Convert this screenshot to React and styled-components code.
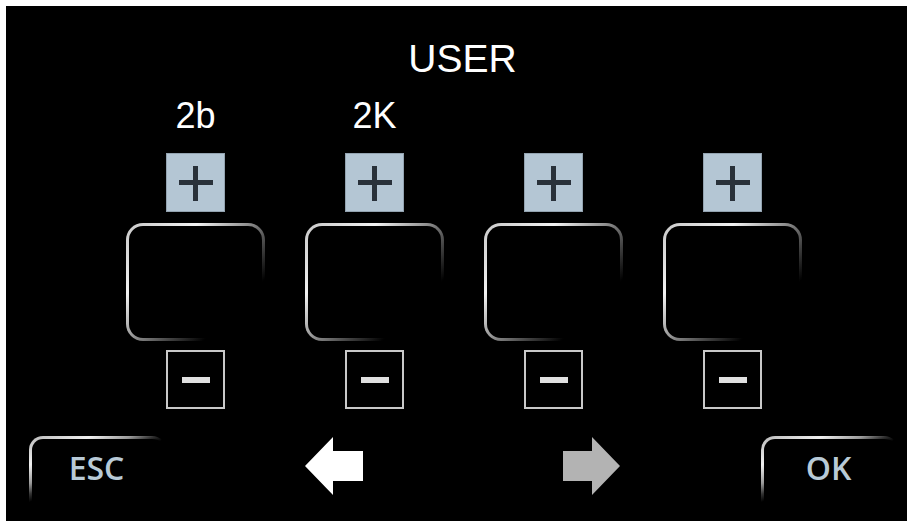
import React from "react";
import styled, { createGlobalStyle } from "styled-components";

const Global = createGlobalStyle`
  html, body { margin: 0; padding: 0; background: #fff; }
  body { overflow: hidden; }
`;

const Panel = styled.div`
  margin: 6px 0 0 6px;
  width: 901px;
  height: 515px;
  background: #000;
  box-sizing: border-box;
  padding-top: 33px;
  display: flex;
  flex-direction: column;
  font-family: "Liberation Sans", Arial, sans-serif;
`;

const Title = styled.div`
  height: 40px;
  line-height: 40px;
  font-size: 39px;
  color: #fff;
  text-align: center;
  padding-left: 12px;
`;

const Columns = styled.div`
  display: grid;
  grid-template-columns: repeat(4, 179px);
  padding-left: 100px;
  margin-top: 19px;
`;

const Column = styled.div`
  display: flex;
  flex-direction: column;
  align-items: center;
`;

const Label = styled.div`
  height: 36px;
  line-height: 36px;
  font-size: 36px;
  color: #fff;
  margin-bottom: 19px;
`;

const PlusButton = styled.div`
  width: 59px;
  height: 59px;
  box-sizing: border-box;
  background: #b4c6d4;
  border: 1px solid #93a3b0;
  position: relative;
  &::before, &::after {
    content: "";
    position: absolute;
    background: #29313a;
  }
  &::before { left: 12px; top: 26px; width: 34px; height: 5px; }
  &::after { left: 26px; top: 12px; width: 5px; height: 35px; }
`;

const Display = styled.div`
  margin-top: 11px;
  width: 139px;
  height: 118px;
  box-sizing: border-box;
  border: 3px solid transparent;
  border-radius: 17px;
  background:
    linear-gradient(#000, #000) padding-box,
    linear-gradient(135deg, #c8c8c8 0%, #f2f2f2 28%, #9a9a9a 46%, #444 62%, #000 76%) border-box;
`;

const MinusButton = styled.div`
  margin-top: 9px;
  width: 59px;
  height: 59px;
  box-sizing: border-box;
  border: 2px solid #c9c9c9;
  display: flex;
  align-items: center;
  justify-content: center;
  &::before {
    content: "";
    width: 28px;
    height: 6px;
    background: #e0e0e0;
  }
`;

const BottomBar = styled.div`
  display: flex;
  align-items: flex-start;
  margin-top: 27px;
  padding-left: 23px;
`;

const KeyButton = styled.div`
  width: 137px;
  height: 69px;
  box-sizing: border-box;
  border: 3px solid transparent;
  border-right-width: 0;
  border-bottom-width: 0;
  border-radius: 14px 14px 0 0;
  background:
    linear-gradient(#000, #000) padding-box,
    linear-gradient(155deg, #b8b8b8 0%, #f0f0f0 22%, #9a9a9a 36%, #333 44%, #000 50%) border-box;
  display: flex;
  align-items: center;
  justify-content: center;
  padding-bottom: 9px;
  padding-right: 5px;
  font-family: "Open Sans", "Liberation Sans", sans-serif;
  font-weight: 600;
  font-size: 32px;
  color: #b8cad7;
  margin-left: ${(p) => p.$ml || 0}px;
`;

const Arrow = styled.svg`
  margin-top: 1px;
  margin-left: ${(p) => p.$ml}px;
  display: block;
`;

function Slot({ label }) {
  return (
    <Column>
      <Label>{label}</Label>
      <PlusButton />
      <Display />
      <MinusButton />
    </Column>
  );
}

export default function App() {
  return (
    <>
      <Global />
      <Panel>
        <Title>USER</Title>
        <Columns>
          <Slot label="2b" />
          <Slot label="2K" />
          <Slot label="" />
          <Slot label="" />
        </Columns>
        <BottomBar>
          <KeyButton>ESC</KeyButton>
          <Arrow $ml={139} width="58" height="58" viewBox="0 0 58 58">
            <polygon points="0,29 28,0 28,14 58,14 58,44 28,44 28,58" fill="#fff" />
          </Arrow>
          <Arrow $ml={200} width="58" height="58" viewBox="0 0 58 58">
            <polygon points="57,29 29,0 29,14 0,14 0,44 29,44 29,58" fill="#b3b3b3" />
          </Arrow>
          <KeyButton $ml={140}>OK</KeyButton>
        </BottomBar>
      </Panel>
    </>
  );
}
